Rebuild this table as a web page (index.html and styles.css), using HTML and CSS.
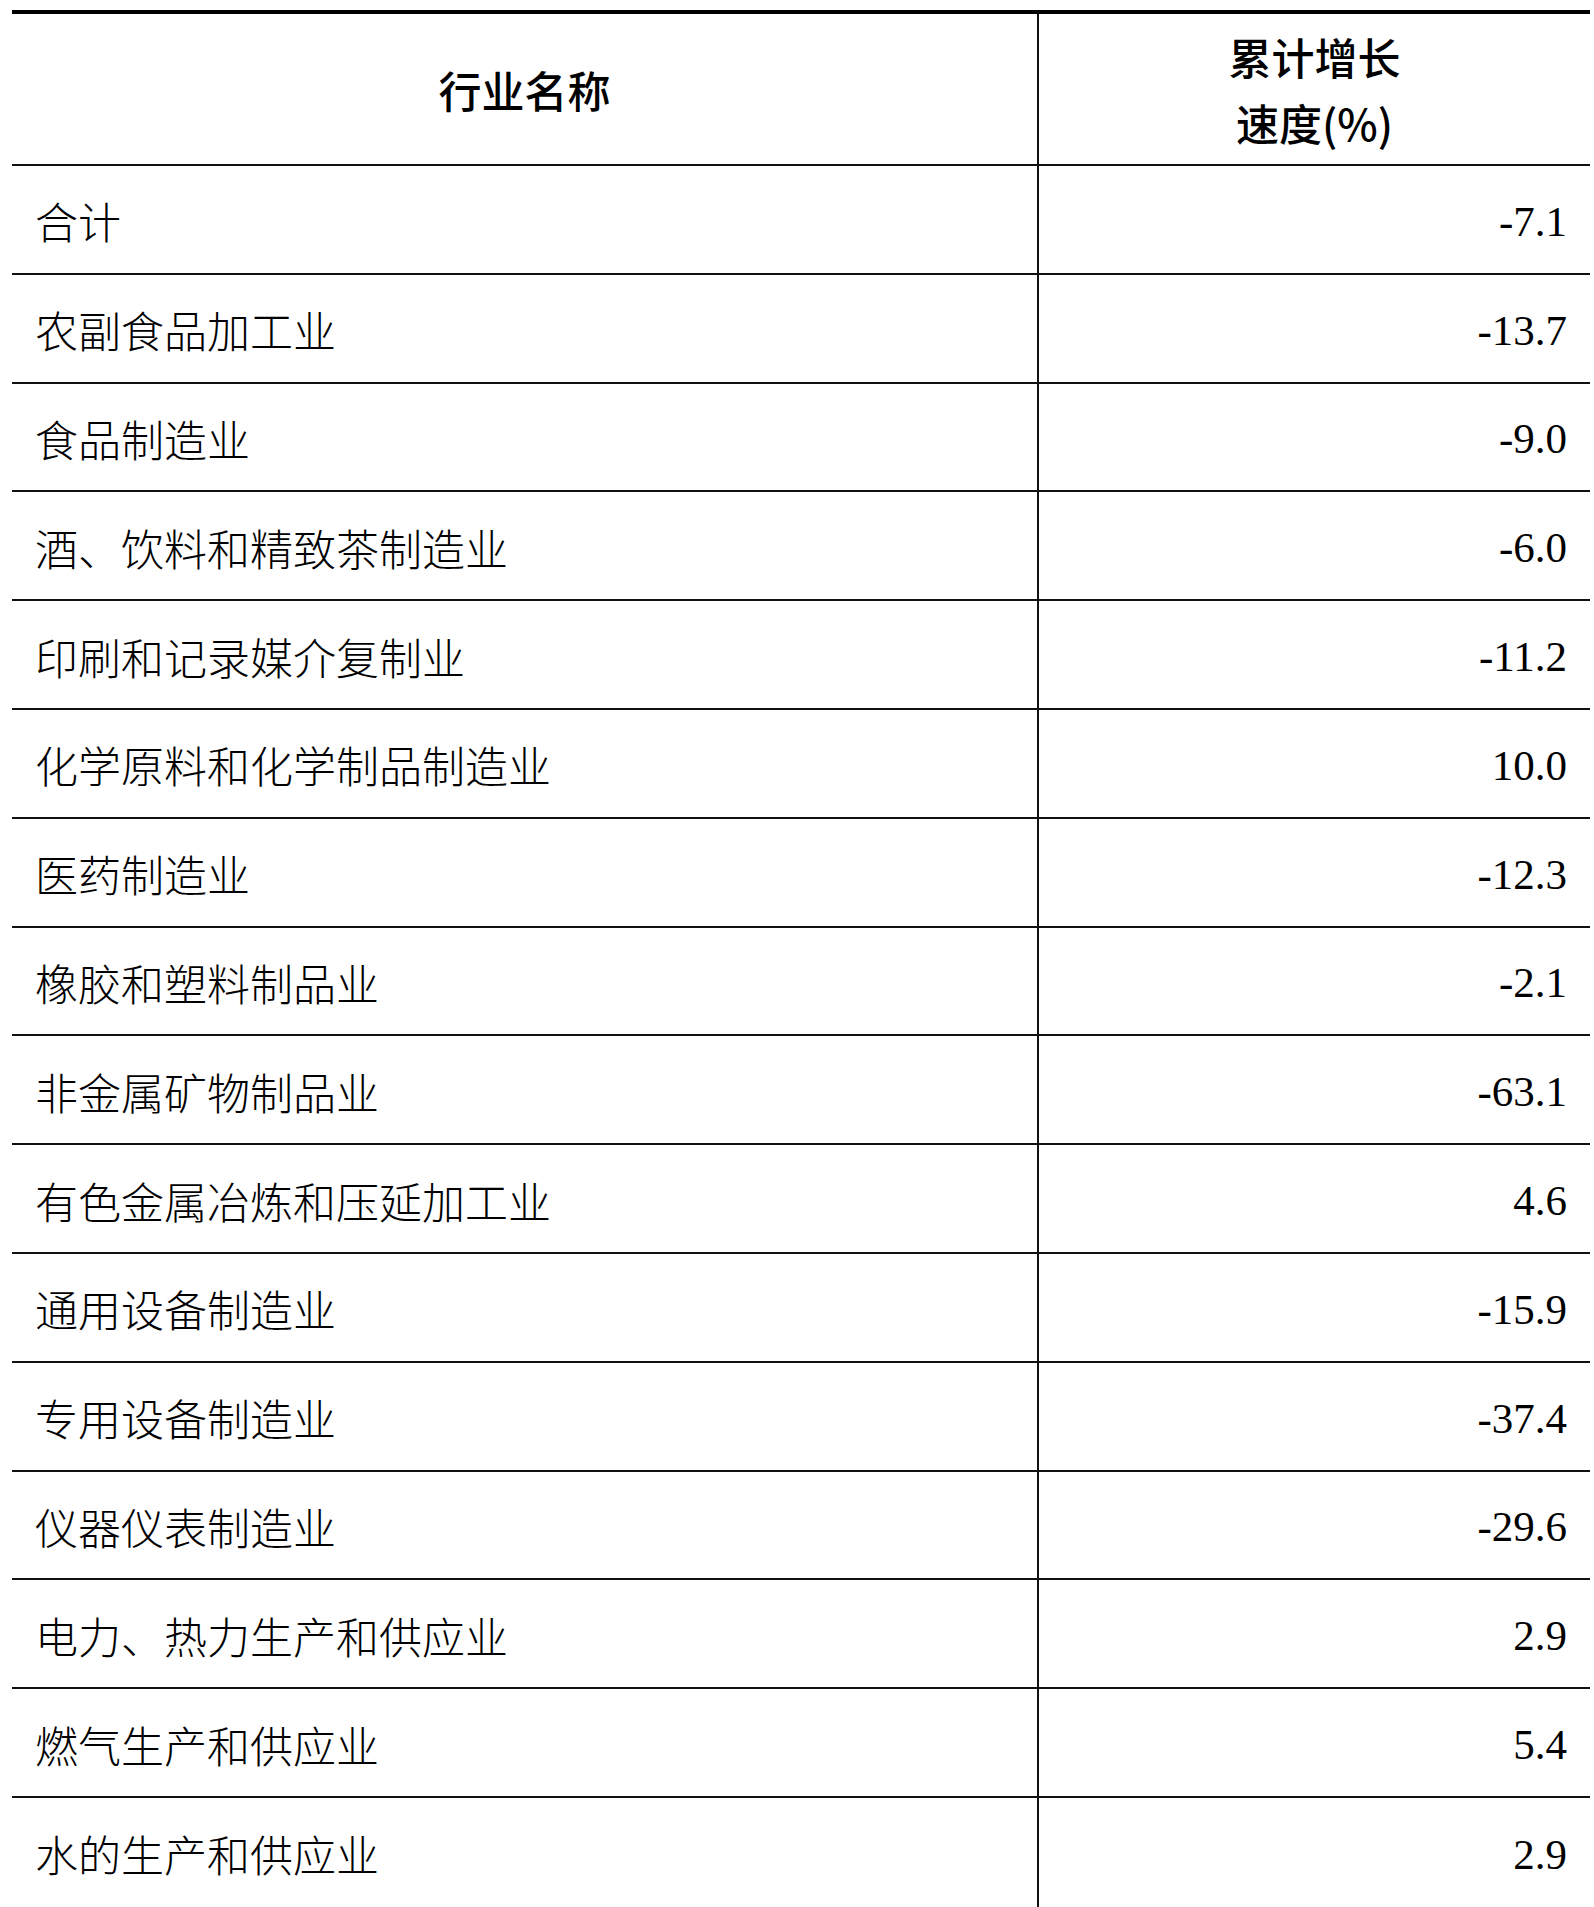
FILE: index.html
```html
<!DOCTYPE html>
<html lang="zh-CN">
<head>
<meta charset="utf-8">
<title>行业累计增长速度</title>
<link rel="stylesheet" href="styles.css">
</head>
<body>
<div class="table">
  <div class="cell head name">行业名称</div>
  <div class="cell head val">累计增长<br>速度(%)</div>

  <div class="cell name">合计</div><div class="cell val">-7.1</div>
  <div class="cell name">农副食品加工业</div><div class="cell val">-13.7</div>
  <div class="cell name">食品制造业</div><div class="cell val">-9.0</div>
  <div class="cell name">酒、饮料和精致茶制造业</div><div class="cell val">-6.0</div>
  <div class="cell name">印刷和记录媒介复制业</div><div class="cell val">-11.2</div>
  <div class="cell name">化学原料和化学制品制造业</div><div class="cell val">10.0</div>
  <div class="cell name">医药制造业</div><div class="cell val">-12.3</div>
  <div class="cell name">橡胶和塑料制品业</div><div class="cell val">-2.1</div>
  <div class="cell name">非金属矿物制品业</div><div class="cell val">-63.1</div>
  <div class="cell name">有色金属冶炼和压延加工业</div><div class="cell val">4.6</div>
  <div class="cell name">通用设备制造业</div><div class="cell val">-15.9</div>
  <div class="cell name">专用设备制造业</div><div class="cell val">-37.4</div>
  <div class="cell name">仪器仪表制造业</div><div class="cell val">-29.6</div>
  <div class="cell name">电力、热力生产和供应业</div><div class="cell val">2.9</div>
  <div class="cell name">燃气生产和供应业</div><div class="cell val">5.4</div>
  <div class="cell name last">水的生产和供应业</div><div class="cell val last">2.9</div>
</div>
</body>
</html>
```

FILE: styles.css
```css
html, body {
  margin: 0;
  padding: 0;
  background: #fff;
}

body {
  padding: 10px 4px 0 12px;
  font-family: "Liberation Serif", "Noto Sans CJK SC", serif;
  color: #000;
}

.table {
  width: 1578px;
  display: grid;
  grid-template-columns: 1027px 551px;
  grid-template-rows: 152px repeat(16, 108.8px);
  border-top: 4px solid #000;
}

.cell {
  box-sizing: border-box;
  border-bottom: 2px solid #111;
  display: flex;
  align-items: center;
  font-size: 43px;
}

.cell.last {
  border-bottom: none;
}

.name {
  border-right: 2px solid #111;
  padding-left: 23px;
  font-family: "Noto Sans CJK SC", sans-serif;
  font-weight: 300;
  padding-top: 2px;
}

.val {
  justify-content: flex-end;
  padding-right: 23px;
  padding-top: 4px;
  font-family: "Liberation Serif", serif;
}

.head {
  justify-content: center;
  text-align: center;
  padding: 0;
  font-family: "Noto Sans CJK SC", sans-serif;
  font-weight: 500;
  line-height: 66px;
}

.head.val {
  padding-right: 0;
  padding-left: 0;
}
```
